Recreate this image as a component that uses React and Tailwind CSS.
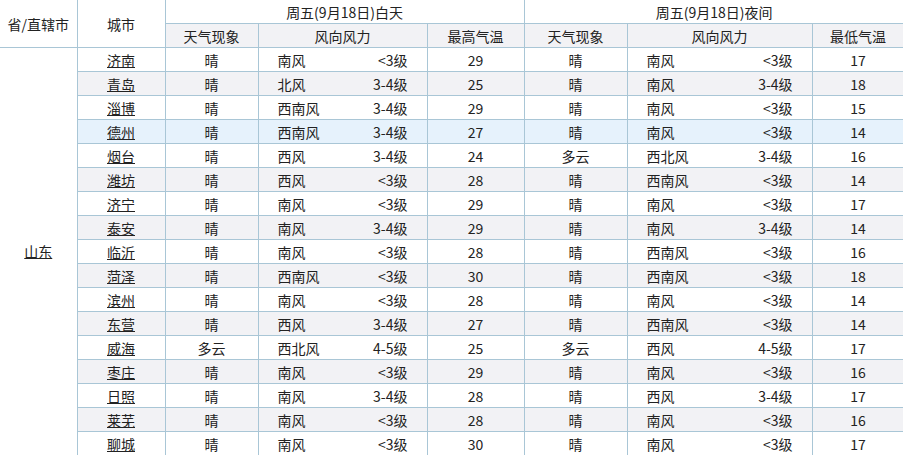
import React from "react";

const rows = [
  ["济南", "晴", "南风", "<3级", "29", "晴", "南风", "<3级", "17"],
  ["青岛", "晴", "北风", "3-4级", "25", "晴", "南风", "3-4级", "18"],
  ["淄博", "晴", "西南风", "3-4级", "29", "晴", "南风", "<3级", "15"],
  ["德州", "晴", "西南风", "3-4级", "27", "晴", "南风", "<3级", "14"],
  ["烟台", "晴", "西风", "3-4级", "24", "多云", "西北风", "3-4级", "16"],
  ["潍坊", "晴", "西风", "<3级", "28", "晴", "西南风", "<3级", "14"],
  ["济宁", "晴", "南风", "<3级", "29", "晴", "南风", "<3级", "17"],
  ["泰安", "晴", "南风", "3-4级", "29", "晴", "南风", "3-4级", "14"],
  ["临沂", "晴", "南风", "<3级", "28", "晴", "西南风", "<3级", "16"],
  ["菏泽", "晴", "西南风", "<3级", "30", "晴", "西南风", "<3级", "18"],
  ["滨州", "晴", "南风", "<3级", "28", "晴", "南风", "<3级", "14"],
  ["东营", "晴", "西风", "3-4级", "27", "晴", "西南风", "<3级", "14"],
  ["威海", "多云", "西北风", "4-5级", "25", "多云", "西风", "4-5级", "17"],
  ["枣庄", "晴", "南风", "<3级", "29", "晴", "南风", "<3级", "16"],
  ["日照", "晴", "南风", "3-4级", "28", "晴", "西风", "3-4级", "17"],
  ["莱芜", "晴", "南风", "<3级", "28", "晴", "南风", "<3级", "16"],
  ["聊城", "晴", "南风", "<3级", "30", "晴", "南风", "<3级", "17"],
];

const cell = "border border-[#a9c6d6] p-0 text-center align-middle";

function Wind({ dir, lvl }) {
  return (
    <div className="flex items-center justify-between px-[19px]">
      <span>{dir}</span>
      <span>{lvl}</span>
    </div>
  );
}

export default function App() {
  return (
    <div
      className="w-[903px] h-[455px] overflow-hidden bg-white text-[#222] text-[14px] leading-[22px]"
      style={{ fontFamily: '"Noto Sans CJK SC", "Noto Sans", sans-serif' }}
    >
      <table className="table-fixed border-collapse w-[904px] -mt-px">
        <colgroup>
          <col className="w-[77px]" />
          <col className="w-[88px]" />
          <col className="w-[93px]" />
          <col className="w-[169px]" />
          <col className="w-[97px]" />
          <col className="w-[103px]" />
          <col className="w-[185px]" />
          <col className="w-[92px]" />
        </colgroup>
        <thead>
          <tr className="h-[24px]">
            <th rowSpan={2} className={`${cell} font-normal border-l-0`}>省/直辖市</th>
            <th rowSpan={2} className={`${cell} font-normal`}>城市</th>
            <th colSpan={3} className={`${cell} font-normal`}>周五(9月18日)白天</th>
            <th colSpan={3} className={`${cell} font-normal`}>周五(9月18日)夜间</th>
          </tr>
          <tr className="h-[24px] bg-[#f2f2f5]">
            <th className={`${cell} font-normal`}>天气现象</th>
            <th className={`${cell} font-normal`}>风向风力</th>
            <th className={`${cell} font-normal`}>最高气温</th>
            <th className={`${cell} font-normal`}>天气现象</th>
            <th className={`${cell} font-normal`}>风向风力</th>
            <th className={`${cell} font-normal`}>最低气温</th>
          </tr>
        </thead>
        <tbody>
          {rows.map((r, i) => {
            const bg =
              r[0] === "德州"
                ? "bg-[#e6f2fc]"
                : i % 2 === 1
                ? "bg-[#f2f2f5]"
                : "bg-white";
            return (
              <tr key={r[0]} className={`h-[24px] ${bg}`}>
                {i === 0 && (
                  <td rowSpan={rows.length + 1} className={`${cell} bg-white border-l-0 align-top`}>
                    <div className="h-[192px]" />
                    <span className="underline">山东</span>
                  </td>
                )}
                <td className={cell}>
                  <span className="underline">{r[0]}</span>
                </td>
                <td className={cell}>{r[1]}</td>
                <td className={cell}>
                  <Wind dir={r[2]} lvl={r[3]} />
                </td>
                <td className={cell}>{r[4]}</td>
                <td className={cell}>{r[5]}</td>
                <td className={cell}>
                  <Wind dir={r[6]} lvl={r[7]} />
                </td>
                <td className={cell}>{r[8]}</td>
              </tr>
            );
          })}
        </tbody>
      </table>
    </div>
  );
}
